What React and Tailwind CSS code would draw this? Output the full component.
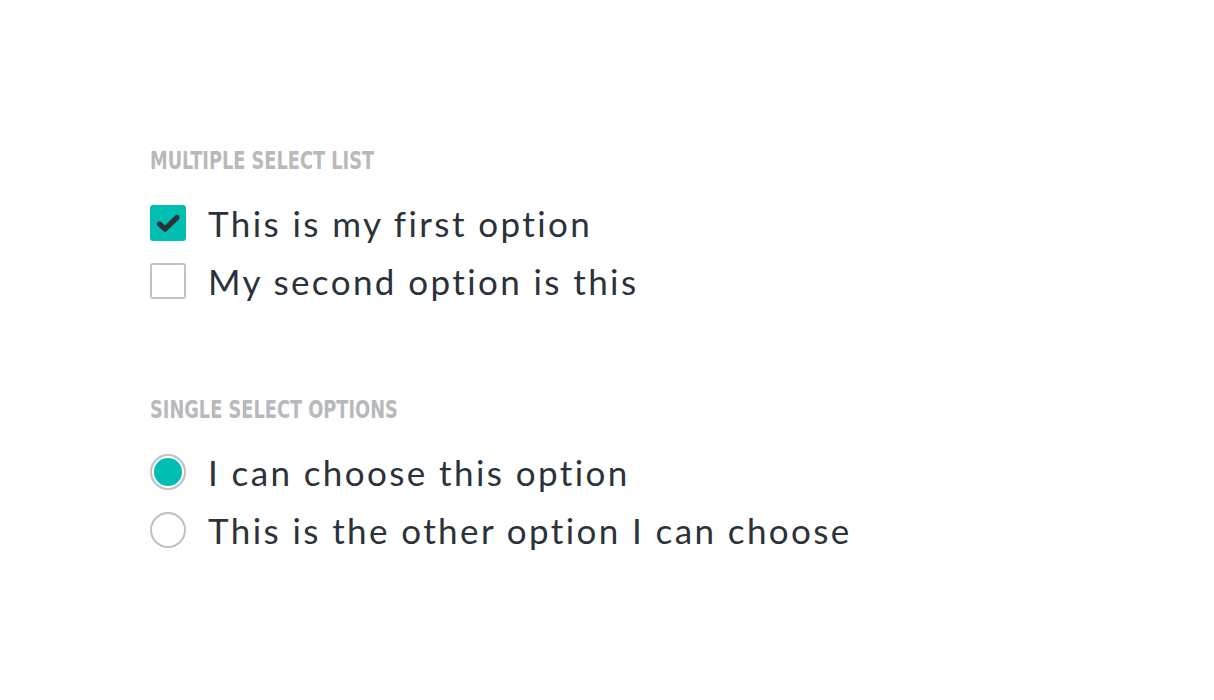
import React from "react";

const bodyFont = { fontFamily: "Lato, sans-serif" };

function Check({ checked, label }) {
  return (
    <div className="flex items-center h-[58px]">
      {checked ? (
        <div className="w-[36px] h-[36px] rounded-[3px] bg-[#00bfb2] flex items-center justify-center shrink-0">
          <svg width="36" height="36" viewBox="0 0 36 36">
            <path d="M9.5 19 L15 24 L27 12.5" fill="none" stroke="#2c323a" strokeWidth="5.2" strokeLinecap="round" strokeLinejoin="round" />
          </svg>
        </div>
      ) : (
        <div className="w-[36px] h-[36px] rounded-[3px] border-2 border-[#c1c1c6] bg-white shrink-0" />
      )}
      <span className="ml-[22px] text-[35px] text-[#2c323a] tracking-[2.4px] leading-none" style={bodyFont}>{label}</span>
    </div>
  );
}

function Radio({ checked, label }) {
  return (
    <div className="flex items-center h-[58px]">
      <div className="w-[36px] h-[36px] rounded-full border-2 border-[#c1c1c6] bg-white flex items-center justify-center shrink-0">
        {checked && <div className="w-[28px] h-[28px] rounded-full bg-[#00bfb2]" />}
      </div>
      <span className="ml-[22px] text-[35px] text-[#2c323a] tracking-[2.4px] leading-none" style={bodyFont}>{label}</span>
    </div>
  );
}

function Heading({ children }) {
  return (
    <div
      className="text-[25px] font-bold text-[#b8b9bd] leading-none uppercase origin-left scale-x-[0.79] whitespace-nowrap"
      style={{ fontFamily: "'DejaVu Sans Condensed', 'DejaVu Sans', sans-serif" }}
    >
      {children}
    </div>
  );
}

export default function App() {
  return (
    <div className="w-[1214px] h-[700px] bg-white pl-[150px] pt-[148px]">
      <Heading>Multiple Select List</Heading>
      <div className="mt-[21px]">
        <Check checked label="This is my first option" />
        <Check label="My second option is this" />
      </div>
      <div className="mt-[87px]">
        <Heading>Single Select Options</Heading>
      </div>
      <div className="mt-[21px]">
        <Radio checked label="I can choose this option" />
        <Radio label="This is the other option I can choose" />
      </div>
    </div>
  );
}
